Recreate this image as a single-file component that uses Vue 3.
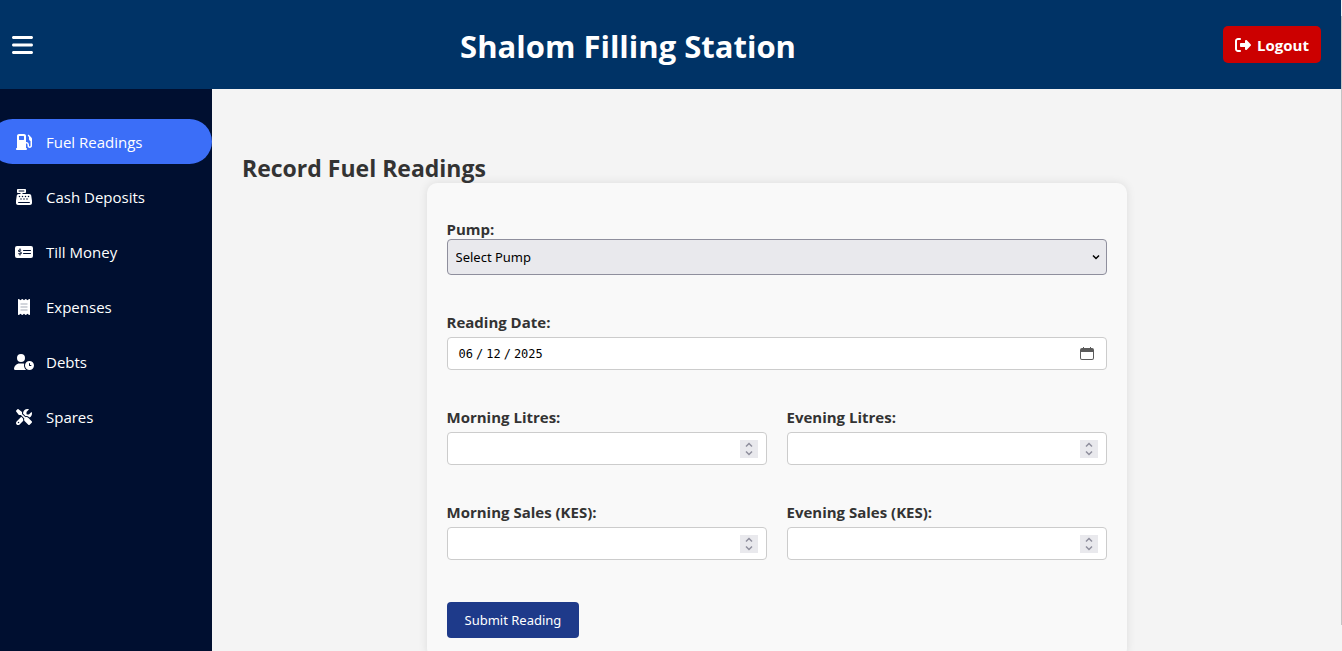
<script setup>
import { ref } from 'vue'

const active = ref('Fuel Readings')
const pump = ref('')
const date = ref('2025-06-12')
const readings = ref({ morningLitres: '', eveningLitres: '', morningSales: '', eveningSales: '' })

const fields = [
  { key: 'morningLitres', label: 'Morning Litres:' },
  { key: 'eveningLitres', label: 'Evening Litres:' },
  { key: 'morningSales', label: 'Morning Sales (KES):' },
  { key: 'eveningSales', label: 'Evening Sales (KES):' },
]

const menu = [
  {
    name: 'Fuel Readings',
    box: '0 0 512 512',
    width: 16,
    path: 'M32 64C32 28.7 60.7 0 96 0L256 0c35.3 0 64 28.7 64 64l0 192 8 0c48.6 0 88 39.4 88 88l0 32c0 13.3 10.7 24 24 24s24-10.7 24-24l0-154c-27.6-7.1-48-32.2-48-62l0-64L384 64c-8.8-8.8-8.8-23.2 0-32s23.2-8.8 32 0l77.3 77.3c12 12 18.7 28.3 18.7 45.3l0 13.5 0 24 0 32 0 152c0 39.8-32.2 72-72 72s-72-32.2-72-72l0-32c0-22.1-17.9-40-40-40l-8 0 0 144c17.7 0 32 14.3 32 32s-14.3 32-32 32L32 512c-17.7 0-32-14.3-32-32s14.3-32 32-32L32 64zM96 80l0 96c0 8.8 7.2 16 16 16l128 0c8.8 0 16-7.2 16-16l0-96c0-8.8-7.2-16-16-16L112 64c-8.8 0-16 7.2-16 16z',
  },
  {
    name: 'Cash Deposits',
    box: '0 0 512 512',
    width: 16,
    path: 'M64 0C46.3 0 32 14.3 32 32l0 64c0 17.7 14.3 32 32 32l80 0 0 32-57 0c-31.6 0-58.5 23.1-63.3 54.4L1.1 364.1C.4 368.8 0 373.6 0 378.4L0 448c0 35.3 28.7 64 64 64l384 0c35.3 0 64-28.7 64-64l0-69.6c0-4.8-.4-9.6-1.1-14.4L488.2 214.4C483.5 183.1 456.6 160 425 160l-217 0 0-32 80 0c17.7 0 32-14.3 32-32l0-64c0-17.7-14.3-32-32-32L64 0zM96 48l160 0c8.8 0 16 7.2 16 16s-7.2 16-16 16L96 80c-8.8 0-16-7.2-16-16s7.2-16 16-16zM64 432c0-8.8 7.2-16 16-16l352 0c8.8 0 16 7.2 16 16s-7.2 16-16 16L80 448c-8.8 0-16-7.2-16-16zm48-168a24 24 0 1 1 0-48 24 24 0 1 1 0 48zm120-24a24 24 0 1 1 -48 0 24 24 0 1 1 48 0zM160 344a24 24 0 1 1 0-48 24 24 0 1 1 0 48zM328 240a24 24 0 1 1 -48 0 24 24 0 1 1 48 0zM256 344a24 24 0 1 1 0-48 24 24 0 1 1 0 48zM424 240a24 24 0 1 1 -48 0 24 24 0 1 1 48 0zM352 344a24 24 0 1 1 0-48 24 24 0 1 1 0 48z',
  },
  {
    name: 'Till Money',
    box: '0 0 576 512',
    width: 18,
    path: 'M64 64H512a64 64 0 0 1 64 64V384a64 64 0 0 1-64 64H64a64 64 0 0 1-64-64V128a64 64 0 0 1 64-64zM272 192a16 16 0 0 0 0 32H496a16 16 0 0 0 0-32zM272 288a16 16 0 0 0 0 32H496a16 16 0 0 0 0-32z',
    mark: 'M198 204c-22-14-84-18-84 14 0 42 88 24 88 68 0 38-64 32-94 16M160 142v52M160 314v54',
  },
  {
    name: 'Expenses',
    box: '0 0 384 512',
    width: 12,
    path: 'M14 2.200C22.500-1.700 32.500-.3 39.600 5.800L80 40.400 120.400 5.800c9-7.700 22.300-7.700 31.200 0L192 40.400 232.400 5.800c9-7.700 22.300-7.700 31.200 0L304 40.400 344.400 5.800c7.100-6.100 17.100-7.500 25.600-3.600s14 12.400 14 21.800l0 464c0 9.400-5.500 17.900-14 21.800s-18.500 2.500-25.600-3.600L304 471.600l-40.400 34.600c-9 7.700-22.300 7.700-31.200 0L192 471.600l-40.400 34.600c-9 7.700-22.300 7.700-31.200 0L80 471.600 39.600 506.200c-7.100 6.100-17.100 7.500-25.600 3.600S0 497.400 0 488L0 24C0 14.600 5.500 6.100 14 2.200z',
    lines: 'M80 160H304M80 256H304M80 352H304',
  },
  {
    name: 'Debts',
    box: '0 0 640 512',
    width: 20,
    path: 'M224 0a128 128 0 1 1 0 256A128 128 0 1 1 224 0zM178.300 304h91.400c20.600 0 40.400 3.500 58.800 9.900C323 331 320 349.100 320 368c0 59.500 29.500 112.100 74.800 144H29.700C13.300 512 0 498.700 0 482.300 0 383.800 79.800 304 178.300 304zM352 368a144 144 0 1 1 288 0 144 144 0 1 1-288 0zm144-80c-8.800 0-16 7.200-16 16v64c0 8.800 7.200 16 16 16h48c8.800 0 16-7.200 16-16s-7.200-16-16-16h-32v-48c0-8.800-7.200-16-16-16z',
  },
  {
    name: 'Spares',
    box: '0 0 512 512',
    width: 16,
    path: 'M78.6 5C69.1-2.4 55.6-1.5 47 7L7 47c-8.500 8.500-9.400 22-2.100 31.600l80 104c4.500 5.900 11.600 9.400 19 9.400l54.100 0 109 109c-14.700 29-10 65.400 14.300 89.600l112 112c12.500 12.500 32.800 12.500 45.300 0l64-64c12.500-12.500 12.500-32.800 0-45.300l-112-112c-24.200-24.200-60.600-29-89.600-14.300l-109-109 0-54.100c0-7.500-3.500-14.500-9.400-19L78.600 5zM19.900 396.100C7.200 408.800 0 426.100 0 444.100C0 481.600 30.400 512 67.900 512c18 0 35.300-7.200 48-19.900L233.700 374.300c-7.800-20.900-9-43.600-3.600-65.100l-61.700-61.700L19.900 396.100zM512 144c0-10.500-1.100-20.700-3.200-30.500c-2.400-11.200-16.100-14.100-24.200-6l-63.900 63.900c-3 3-7.100 4.700-11.300 4.700L352 176c-8.800 0-16-7.200-16-16l0-57.400c0-4.200 1.700-8.300 4.700-11.300l63.900-63.900c8.100-8.100 5.200-21.800-6-24.200C388.700 1.100 378.500 0 368 0C288.500 0 224 64.500 224 144l0 .8 85.300 85.300c36-9.100 75.800 .5 104 28.700L429 274.500c49-23 83-72.800 83-130.500zM56 432a24 24 0 1 1 48 0 24 24 0 1 1 -48 0z',
  },
]
</script>

<template>
  <div class="app">
    <header class="topbar">
      <button class="toggle" type="button" aria-label="Toggle menu">
        <svg viewBox="0 0 448 512" width="21" height="24" fill="currentColor">
          <path d="M0 96C0 78.300 14.300 64 32 64l384 0c17.700 0 32 14.300 32 32s-14.300 32-32 32L32 128C14.300 128 0 113.700 0 96zM0 256c0-17.700 14.300-32 32-32l384 0c17.700 0 32 14.300 32 32s-14.300 32-32 32L32 288c-17.700 0-32-14.300-32-32zM448 416c0 17.700-14.300 32-32 32L32 448c-17.700 0-32-14.300-32-32s14.300-32 32-32l384 0c17.700 0 32 14.300 32 32z" />
        </svg>
      </button>
      <h1>Shalom Filling Station</h1>
      <button class="logout" type="button">
        <svg viewBox="0 0 512 512" width="16" height="16" fill="currentColor" aria-hidden="true">
          <path d="M377.900 105.900L500.700 228.700c7.200 7.200 11.300 17.100 11.300 27.300s-4.100 20.100-11.300 27.300L377.900 406.100c-6.400 6.400-15 9.900-24 9.900c-18.700 0-33.900-15.200-33.900-33.900l0-62.100-128 0c-17.700 0-32-14.300-32-32l0-64c0-17.700 14.300-32 32-32l128 0 0-62.100c0-18.700 15.200-33.900 33.900-33.900c9 0 17.600 3.600 24 9.900zM160 96L96 96c-17.700 0-32 14.300-32 32l0 256c0 17.700 14.300 32 32 32l64 0c17.700 0 32 14.300 32 32s-14.300 32-32 32l-64 0c-53 0-96-43-96-96L0 128C0 75 43 32 96 32l64 0c17.700 0 32 14.300 32 32s-14.300 32-32 32z" />
        </svg>
        Logout
      </button>
    </header>

    <div class="body">
      <nav class="sidebar">
        <a
          v-for="item in menu"
          :key="item.name"
          href="#"
          :class="['item', { active: item.name === active }]"
          @click.prevent="active = item.name"
        >
          <span class="icon">
            <svg :viewBox="item.box" :width="item.width" height="16" aria-hidden="true">
              <path :d="item.path" fill="currentColor" fill-rule="evenodd" />
              <path v-if="item.mark" :d="item.mark" class="mark" />
              <path v-if="item.lines" :d="item.lines" class="lines" />
            </svg>
          </span>
          {{ item.name }}
        </a>
      </nav>

      <main class="content">
        <h2>Record Fuel Readings</h2>
        <form class="card" @submit.prevent>
          <div class="field wide">
            <label for="pump">Pump:</label>
            <div class="control">
              <select id="pump" v-model="pump">
                <option value="">Select Pump</option>
                <option value="1">Pump 1</option>
                <option value="2">Pump 2</option>
              </select>
              <svg class="chevron" viewBox="0 0 8 6" width="8" height="6" aria-hidden="true">
                <path d="M1 1.500l3 3 3-3" />
              </svg>
            </div>
          </div>

          <div class="field wide spaced">
            <label for="date">Reading Date:</label>
            <div class="control">
              <input id="date" v-model="date" type="date" />
              <svg class="calendar" viewBox="0 0 14 14" width="14" height="14" aria-hidden="true">
                <path fill="#5b5b5b" fill-rule="evenodd" d="M3 0h1v1h6V0h1v1h1a2 2 0 0 1 2 2v8a2 2 0 0 1-2 2H2a2 2 0 0 1-2-2V3a2 2 0 0 1 2-2h1zM1 5v6a1 1 0 0 0 1 1h10a1 1 0 0 0 1-1V5z" />
              </svg>
            </div>
          </div>

          <div v-for="field in fields" :key="field.key" class="field spaced">
            <label :for="field.key">{{ field.label }}</label>
            <div class="control">
              <input :id="field.key" v-model="readings[field.key]" type="number" step="any" />
              <svg class="spinner" viewBox="0 0 18 18" width="18" height="18" aria-hidden="true">
                <path fill="#e9e9ed" d="M0 0h18v18H0z" />
                <path class="arrow" d="M6 6.500l3-3 3 3M6 11.500l3 3 3-3" />
              </svg>
            </div>
          </div>

          <button class="submit" type="submit">Submit Reading</button>
        </form>
      </main>
    </div>
    <div class="scroll-thumb"></div>
  </div>
</template>

<style>
body {
  margin: 0;
  background: #f4f4f4;
}
</style>

<style scoped>
.app {
  position: relative;
  box-sizing: border-box;
  height: 100vh;
  padding-right: 1px;
  display: flex;
  flex-direction: column;
  overflow: hidden;
  background: #f4f4f4;
  color: #333;
  font-family: "Open Sans", "Noto Sans", sans-serif;
  font-size: 15px;
}

.topbar {
  flex: none;
  box-sizing: border-box;
  height: 89px;
  padding: 0 20px 0 12px;
  display: flex;
  align-items: center;
  justify-content: space-between;
  background: #003366;
  color: #fff;
}

button {
  border: 0;
  font-family: inherit;
  color: #fff;
  cursor: pointer;
}

svg {
  display: block;
}

.toggle {
  padding: 0;
  background: none;
}

h1 {
  margin: 0;
  padding-top: 2px;
  font-size: 31px;
  line-height: 40px;
  font-weight: 700;
}

.logout {
  height: 37px;
  padding: 0 12px;
  display: flex;
  align-items: center;
  gap: 6px;
  border-radius: 5px;
  background: #cc0000;
  font-size: 15px;
  font-weight: 700;
}

.body {
  flex: 1;
  min-height: 0;
  display: flex;
}

.sidebar {
  flex: none;
  box-sizing: border-box;
  width: 212px;
  padding-top: 30px;
  display: flex;
  flex-direction: column;
  gap: 10px;
  overflow: hidden;
  background: #000f30;
}

.item {
  height: 45px;
  margin-left: -10px;
  padding-left: 24px;
  display: flex;
  align-items: center;
  gap: 12px;
  border-radius: 23px;
  color: #fff;
  text-decoration: none;
}

.item.active {
  background: #3b6ef8;
}

.icon {
  width: 20px;
  display: flex;
  justify-content: center;
}

.mark {
  fill: none;
  stroke: #000f30;
  stroke-width: 34;
}

.lines {
  fill: none;
  stroke: #c4c8d0;
  stroke-width: 44;
}

.content {
  flex: 1;
  padding: 64px 30px 20px;
  overflow: auto;
  scrollbar-width: none;
}

h2 {
  margin: 0;
  font-size: 23px;
  line-height: 30px;
  font-weight: 700;
}

.card {
  box-sizing: border-box;
  max-width: 700px;
  margin: 0 auto;
  padding: 36px 20px 20px;
  display: grid;
  grid-template-columns: 1fr 1fr;
  gap: 37px 20px;
  border-radius: 10px;
  background: #f9f9f9;
  box-shadow: 0 0 10px rgba(0, 0, 0, 0.1);
}

.field {
  display: flex;
  flex-direction: column;
}

.field.spaced {
  gap: 5px;
}

.field.wide {
  grid-column: 1 / -1;
}

label {
  font-size: 15px;
  line-height: 20px;
  font-weight: 700;
}

.control {
  position: relative;
}

input,
select {
  display: block;
  box-sizing: border-box;
  width: 100%;
  height: 33px;
  padding: 0 10px;
  border: 1px solid #ccc;
  border-radius: 4px;
  background: #fff;
  color: #000;
  font-family: inherit;
  font-size: 13px;
}

select {
  height: 36px;
  padding: 0 8px;
  appearance: none;
  border-color: #8f8f9d;
  background: #e9e9ed;
  font-family: "Noto Sans", sans-serif;
}

input[type="date"] {
  font-family: "DejaVu Sans Mono", monospace;
  font-size: 12px;
}

input[type="date"]::-webkit-datetime-edit-text {
  padding: 0 2px;
}

input[type="date"]::-webkit-calendar-picker-indicator {
  opacity: 0;
}

input[type="number"] {
  appearance: textfield;
}

input::-webkit-inner-spin-button {
  appearance: none;
}

.chevron,
.calendar,
.spinner {
  position: absolute;
  top: 0;
  bottom: 0;
  margin: auto;
  pointer-events: none;
}

.chevron {
  right: 7px;
  fill: none;
  stroke: #000;
  stroke-width: 1.5;
}

.calendar {
  right: 13px;
}

.spinner {
  right: 9px;
}

.arrow {
  fill: none;
  stroke: #8f8f9d;
  stroke-width: 1.5;
}

.submit {
  justify-self: start;
  height: 36px;
  margin-top: 5px;
  padding: 0 18px;
  border-radius: 4px;
  background: #1e3a8a;
  font-family: "Noto Sans", sans-serif;
  font-size: 13px;
}

.scroll-thumb {
  position: absolute;
  top: 16px;
  right: 0;
  bottom: 26px;
  width: 1px;
  background: #c4c4c4;
}
</style>
